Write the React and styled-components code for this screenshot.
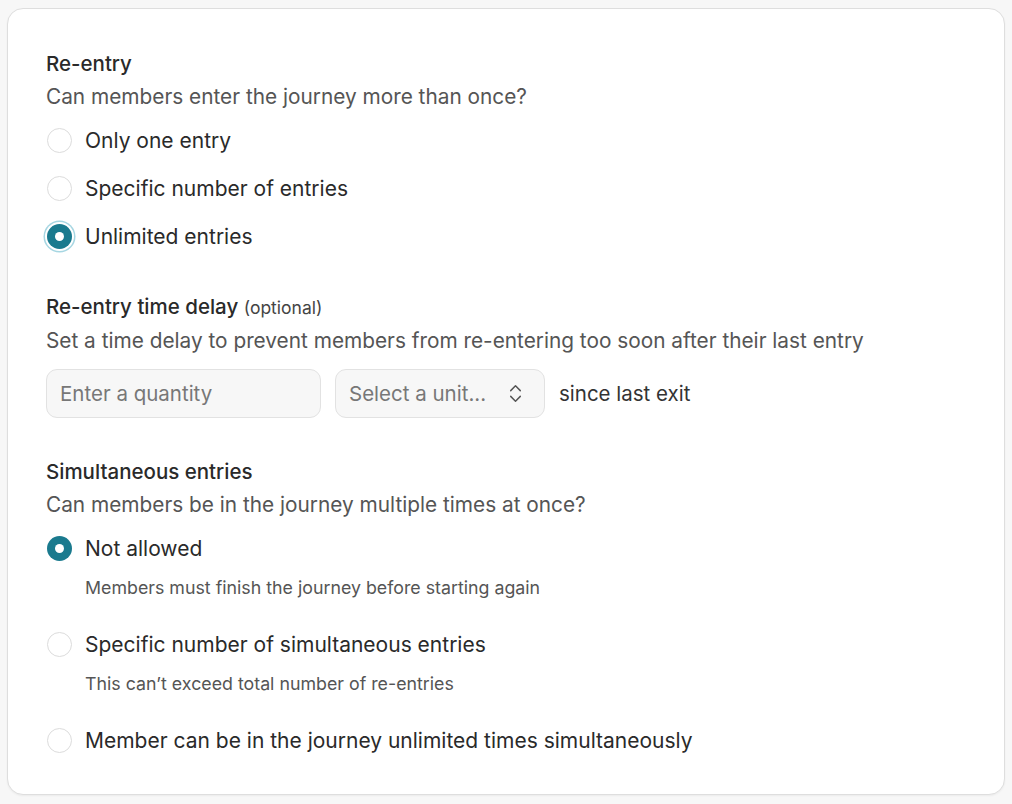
import styled, { createGlobalStyle } from "styled-components";
import { ChevronsUpDown } from "lucide-react";

const GlobalStyle = createGlobalStyle`
  html, body {
    margin: 0;
    padding: 0;
    background: #f7f7f7;
    font-family: Inter, "Noto Sans", sans-serif;
    color: #2a2a2a;
  }
  * { box-sizing: border-box; }
`;

const Page = styled.div`
  padding: 8px 7px 7px 7px;
  width: 1012px;
`;

const Card = styled.div`
  background: #fff;
  border: 1px solid #dedede;
  border-radius: 16px;
  padding: 38px 38px 30px 38px;
  box-shadow: 0 1px 2px rgba(0, 0, 0, 0.05);
  display: flex;
  flex-direction: column;
`;

const Section = styled.section`
  display: flex;
  flex-direction: column;
  margin-bottom: ${(p) => p.$mb || 0}px;
`;

const Title = styled.h3`
  margin: 0;
  font-size: 20.5px;
  font-weight: 500;
  line-height: 33px;
  color: #2a2a2a;
  small {
    font-size: 17.5px;
    font-weight: 400;
    color: #444;
  }
`;

const Desc = styled.p`
  margin: 0;
  font-size: 20.8px;
  line-height: 33px;
  color: #555;
`;

const Options = styled.div`
  display: flex;
  flex-direction: column;
  margin-top: 3px;
`;

const Option = styled.label`
  display: flex;
  flex-direction: column;
  padding: 6px 0;
  min-height: 48px;
  cursor: pointer;
`;

const OptionRow = styled.div`
  display: flex;
  align-items: center;
  gap: 13px;
  height: 36px;
`;

const Radio = styled.span`
  position: relative;
  width: 25px;
  height: 25px;
  border-radius: 50%;
  flex-shrink: 0;
  margin-left: 1px;
  border: ${(p) => (p.$checked ? "none" : "1.5px solid #dcdcdc")};
  background: ${(p) => (p.$checked ? "#1a7a8e" : "#fff")};
  box-shadow: ${(p) => (p.$focus ? "0 0 0 2px #fff, 0 0 0 3.5px #a6d6e2" : "none")};
  &::after {
    content: "";
    display: ${(p) => (p.$checked ? "block" : "none")};
    position: absolute;
    left: 50%;
    top: 50%;
    width: 9px;
    height: 9px;
    margin: -4.5px 0 0 -4.5px;
    border-radius: 50%;
    background: #fff;
  }
`;

const OptionLabel = styled.span`
  font-size: 21px;
  color: #2a2a2a;
  font-weight: 400;
`;

const Hint = styled.span`
  font-size: 17.8px;
  color: #555;
  padding-left: 39px;
  line-height: 30px;
  margin: 7px 0 11px;
`;

const FieldRow = styled.div`
  display: flex;
  align-items: center;
  gap: 14px;
  margin-top: 12px;
`;

const Input = styled.input`
  width: 275px;
  height: 49px;
  border: 1px solid #e2e2e2;
  border-radius: 11px;
  background: #f7f7f7;
  padding: 0 13px;
  font-family: inherit;
  font-size: 20.5px;
  color: #2a2a2a;
  outline: none;
  &::placeholder {
    color: #777;
  }
`;

const Select = styled.div`
  width: 210px;
  height: 49px;
  border: 1px solid #e2e2e2;
  border-radius: 11px;
  background: #f7f7f7;
  padding: 0 17px 0 13px;
  display: flex;
  align-items: center;
  justify-content: space-between;
  font-size: 20.5px;
  color: #777;
  svg {
    color: #555;
  }
`;

const Suffix = styled.span`
  font-size: 20.5px;
  color: #333;
`;

function RadioOption({ label, hint, checked, focus }) {
  return (
    <Option>
      <OptionRow>
        <Radio $checked={checked} $focus={focus} />
        <OptionLabel>{label}</OptionLabel>
      </OptionRow>
      {hint && <Hint>{hint}</Hint>}
    </Option>
  );
}

export default function App() {
  return (
    <Page>
      <GlobalStyle />
      <Card>
        <Section $mb={30}>
          <Title>Re-entry</Title>
          <Desc>Can members enter the journey more than once?</Desc>
          <Options>
            <RadioOption label="Only one entry" />
            <RadioOption label="Specific number of entries" />
            <RadioOption label="Unlimited entries" checked focus />
          </Options>
        </Section>

        <Section $mb={37}>
          <Title>
            Re-entry time delay <small>(optional)</small>
          </Title>
          <Desc>
            Set a time delay to prevent members from re-entering too soon after their last entry
          </Desc>
          <FieldRow>
            <Input placeholder="Enter a quantity" />
            <Select>
              <span>Select a unit...</span>
              <ChevronsUpDown size={23} strokeWidth={1.5} />
            </Select>
            <Suffix>since last exit</Suffix>
          </FieldRow>
        </Section>

        <Section>
          <Title>Simultaneous entries</Title>
          <Desc>Can members be in the journey multiple times at once?</Desc>
          <Options>
            <RadioOption
              label="Not allowed"
              checked
              hint="Members must finish the journey before starting again"
            />
            <RadioOption
              label="Specific number of simultaneous entries"
              hint="This can’t exceed total number of re-entries"
            />
            <RadioOption label="Member can be in the journey unlimited times simultaneously" />
          </Options>
        </Section>
      </Card>
    </Page>
  );
}
